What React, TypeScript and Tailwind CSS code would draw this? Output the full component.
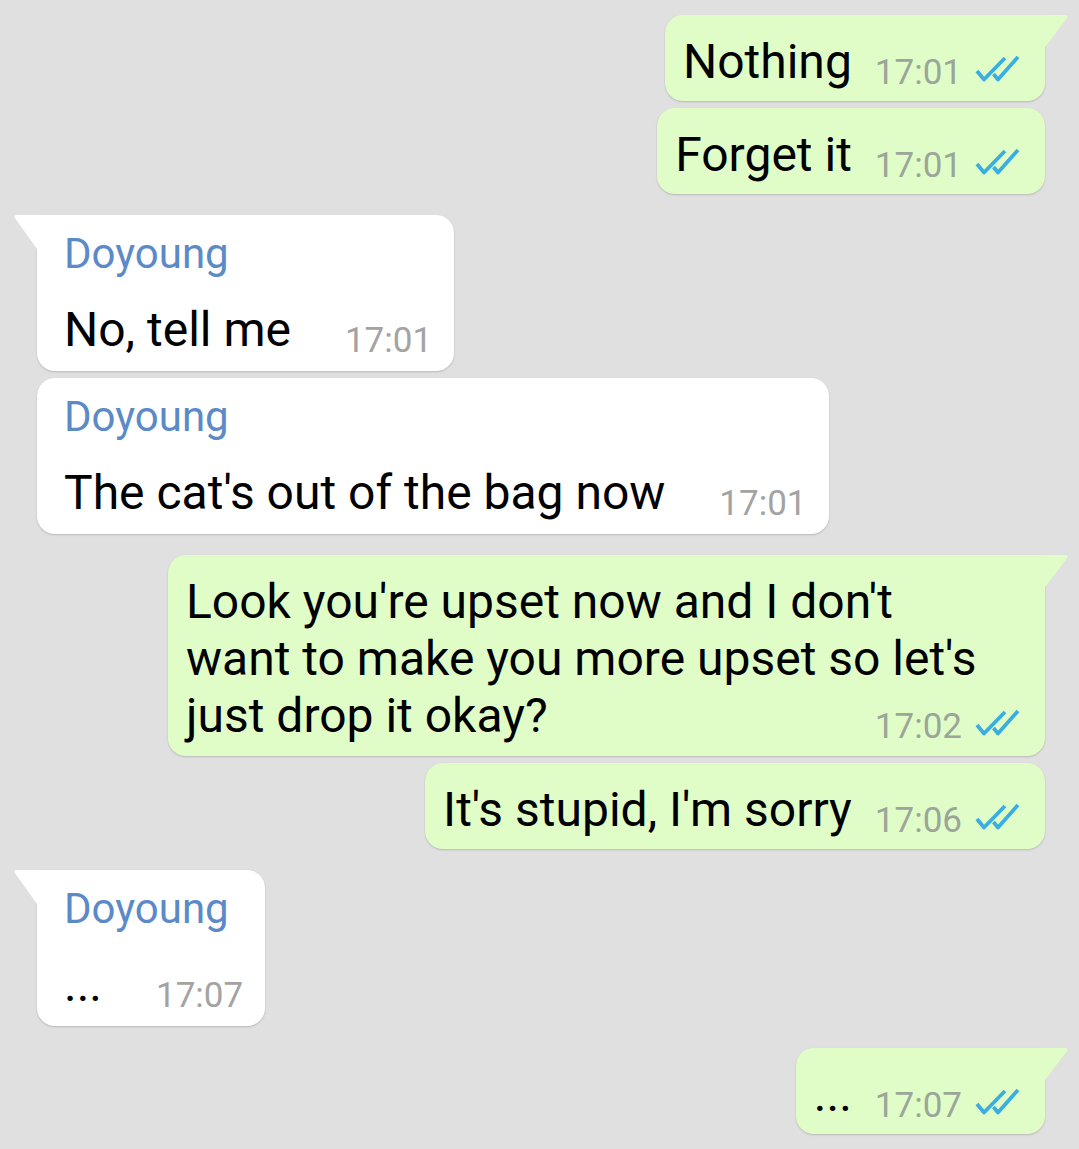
import React from "react";

const font = { fontFamily: "Roboto, 'Noto Sans', sans-serif" };

// double tick, drawn to match the read receipt
function Ticks() {
  return (
    <svg className="-translate-y-[4px]" width="46" height="28" viewBox="0 0 46 28" fill="none" stroke="#3aaee0" strokeWidth="3.8" strokeLinejoin="round">
      <path d="M3 16 L10 24.5 L31 3" />
      <path d="M19.5 19 L24 24.5 L44 2" />
    </svg>
  );
}

function OutTime({ time }: { time: string }) {
  return (
    <div className="flex items-center gap-[12px] text-[35px] leading-[40px] text-[#9ba69a]">
      <span>{time}</span>
      <Ticks />
    </div>
  );
}

function Outgoing({
  text,
  time,
  tail,
  className,
}: {
  text: string;
  time: string;
  tail?: boolean;
  className?: string;
}) {
  return (
    <div
      className={
        "relative self-end flex items-end bg-[#e1fdc7] pl-[18px] pr-[25px] pt-[18px] pb-[11px] shadow-[0_1px_2px_rgba(0,0,0,0.18)] " +
        (tail ? "rounded-[18px] rounded-tr-none " : "rounded-[18px] ") +
        (className ?? "")
      }
    >
      {tail && (
        <svg className="absolute top-0 left-full" width="24" height="32" viewBox="0 0 24 32">
          <path d="M0 0 H20 Q24 0 22 3 L0 32 Z" fill="#e1fdc7" />
        </svg>
      )}
      <span className="text-[48px] leading-[57px] text-black">{text}</span>
      <div className="ml-[23px] translate-y-[3px]">
        <OutTime time={time} />
      </div>
    </div>
  );
}

function Incoming({
  text,
  time,
  tail,
  className,
}: {
  text: string;
  time: string;
  tail?: boolean;
  className?: string;
}) {
  return (
    <div
      className={
        "relative self-start flex flex-col bg-white pl-[27px] pr-[22px] pt-[14px] pb-[13px] shadow-[0_1px_2px_rgba(0,0,0,0.18)] " +
        (tail ? "rounded-[18px] rounded-tl-none " : "rounded-[18px] ") +
        (className ?? "")
      }
    >
      {tail && (
        <svg className="absolute top-0 right-full" width="24" height="34" viewBox="0 0 24 34">
          <path d="M24 0 H4 Q0 0 2 3 L24 34 Z" fill="#ffffff" />
        </svg>
      )}
      <span className="text-[42px] leading-[50px] text-[#5b8ac7]">Doyoung</span>
      <div className="mt-[22px] flex items-end">
        <span className="text-[48px] leading-[57px] text-black">{text}</span>
        <span className="ml-[54px] translate-y-[3px] text-[35px] leading-[40px] text-[#a3a3a3]">{time}</span>
      </div>
    </div>
  );
}

export default function App() {
  return (
    <div className="min-h-[1149px] w-[1079px] bg-[#e0e0e0] pt-[15px] pl-[37px] pr-[34px] flex flex-col" style={font}>
      <Outgoing text="Nothing" time="17:01" tail />
      <Outgoing text="Forget it" time="17:01" className="mt-[7px]" />

      <Incoming text="No, tell me" time="17:01" tail className="mt-[21px]" />
      <Incoming text="The cat's out of the bag now" time="17:01" className="mt-[7px]" />

      <div className="relative self-end mt-[21px] w-[877px] bg-[#e1fdc7] rounded-[18px] rounded-tr-none pl-[18px] pr-[25px] pt-[18px] pb-[9px] shadow-[0_1px_2px_rgba(0,0,0,0.18)]">
        <svg className="absolute top-0 left-full" width="24" height="32" viewBox="0 0 24 32">
          <path d="M0 0 H20 Q24 0 22 3 L0 32 Z" fill="#e1fdc7" />
        </svg>
        <p className="text-[48px] leading-[57px] text-black">
          Look you're upset now and I don't
          <br />
          want to make you more upset so let's
          <br />
          just drop it okay?
        </p>
        <div className="-mt-[37px] flex justify-end">
          <OutTime time="17:02" />
        </div>
      </div>
      <Outgoing text="It's stupid, I'm sorry" time="17:06" className="mt-[7px]" />

      <Incoming text="..." time="17:07" tail className="mt-[21px]" />

      <Outgoing text="..." time="17:07" tail className="mt-[22px]" />
    </div>
  );
}
